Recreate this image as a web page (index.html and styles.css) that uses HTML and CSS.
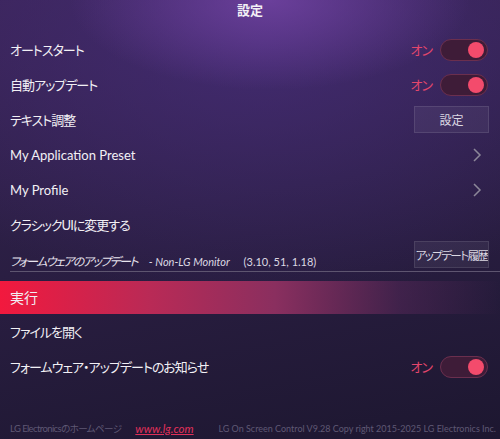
FILE: index.html
```html
<!DOCTYPE html>
<html lang="ja">
<head>
    <meta charset="UTF-8">
    <title>設定</title>
    <link rel="stylesheet" href="styles.css">
</head>
<body>
    <div id="app">
        <div class="title">設定</div>
        <div class="row">
            <span class="label jp">オートスタート</span>
            <span class="switch-wrap"><span class="on-text">オン</span><span class="switch"><span class="knob"></span></span></span>
        </div>
        <div class="row">
            <span class="label jp">自動アップデート</span>
            <span class="switch-wrap"><span class="on-text">オン</span><span class="switch"><span class="knob"></span></span></span>
        </div>
        <div class="row">
            <span class="label jp">テキスト調整</span>
            <button class="small-btn">設定</button>
        </div>
        <div class="row">
            <span class="label">My Application Preset</span>
            <svg class="chevron" width="10" height="14" viewBox="0 0 10 14"><polyline points="2,1 8,7 2,13" fill="none" stroke="#8c8799" stroke-width="1.5"/></svg>
        </div>
        <div class="row">
            <span class="label">My Profile</span>
            <svg class="chevron" width="10" height="14" viewBox="0 0 10 14"><polyline points="2,1 8,7 2,13" fill="none" stroke="#8c8799" stroke-width="1.5"/></svg>
        </div>
        <div class="row">
            <span class="label jp">クラシックUIに変更する</span>
        </div>
        <div class="fw-row">
            <span class="fw-text">
                <span class="fw-title">フォームウェアのアップデート</span>
                <span class="fw-model">- Non-LG Monitor</span>
                <span class="fw-ver">(3.10, 51, 1.18)</span>
            </span>
            <button class="small-btn history">アップデート履歴</button>
        </div>
        <div class="run-bar">実行</div>
        <div class="row">
            <span class="label jp">ファイルを開く</span>
        </div>
        <div class="row">
            <span class="label jp">フォームウェア・アップデートのお知らせ</span>
            <span class="switch-wrap"><span class="on-text">オン</span><span class="switch"><span class="knob"></span></span></span>
        </div>
        <div class="footer">
            <span class="home">LG Electronicsのホームページ</span>
            <a class="link" href="#">www.lg.com</a>
            <span class="copy">LG On Screen Control V9.28 Copy right 2015-2025 LG Electronics Inc.</span>
        </div>
    </div>
</body>
</html>
```
FILE: styles.css
```css
body {
    margin: 0;
    padding: 0;
    font-family: Lato, "Noto Sans CJK JP", sans-serif;
    font-feature-settings: "palt";
    color: #f2f0f5;
}

#app {
    height: 439px;
    display: flex;
    flex-direction: column;
    overflow: hidden;
    background:
        radial-gradient(ellipse 200px 90px at 270px 0px, rgba(120, 70, 170, 0.75), rgba(120, 70, 170, 0) 100%),
        radial-gradient(ellipse 420px 260px at 260px 40px, rgba(70, 45, 120, 0.8), rgba(70, 45, 120, 0) 100%),
        linear-gradient(170deg, #3a2457 0%, #2c1f45 45%, #1d1730 100%);
}

.title {
    height: 32px;
    line-height: 20px;
    text-align: center;
    font-size: 13px;
    font-weight: bold;
}

.row {
    height: 35px;
    flex-shrink: 0;
    display: flex;
    align-items: center;
    justify-content: space-between;
    padding: 0 12px 0 10px;
}

.label {
    font-size: 13px;
}

.label.jp {
    letter-spacing: -1px;
}

.switch-wrap {
    display: flex;
    align-items: center;
    gap: 8px;
}

.on-text {
    color: #e2466c;
    font-size: 13px;
    letter-spacing: -1px;
}

.switch {
    width: 40px;
    height: 20px;
    border: 1px solid #6b2f4e;
    border-radius: 12px;
    background-color: #3e1c38;
    display: flex;
    align-items: center;
    justify-content: flex-end;
    padding: 0 3px;
}

.knob {
    width: 16px;
    height: 16px;
    border-radius: 50%;
    background-color: #f34b6c;
}

.small-btn {
    width: 75px;
    height: 27px;
    margin-right: -1px;
    padding: 0;
    border: 1px solid rgba(255, 255, 255, 0.1);
    background-color: rgba(255, 255, 255, 0.06);
    color: #dcd8e2;
    font-family: inherit;
    font-feature-settings: "palt";
    font-size: 12px;
    white-space: nowrap;
    overflow: hidden;
}

.chevron {
    margin-right: 6px;
}

.fw-row {
    height: 29px;
    flex-shrink: 0;
    display: flex;
    align-items: flex-end;
    justify-content: space-between;
    margin-left: 10px;
    padding-right: 12px;
    border-bottom: 1px solid #5e5570;
}

.fw-text {
    padding-bottom: 2px;
    font-style: italic;
}

.fw-title {
    font-size: 12px;
    letter-spacing: -1.6px;
    color: #e8e4ee;
}

.fw-model {
    font-size: 11px;
    margin-left: 8px;
    color: #dcd8e2;
}

.fw-ver {
    font-style: normal;
    font-size: 11px;
    margin-left: 10px;
    color: #dcd8e2;
}

.history {
    margin-bottom: 3px;
    font-size: 11.5px;
    letter-spacing: -1.6px;
}

.run-bar {
    height: 33px;
    flex-shrink: 0;
    margin-top: 9px;
    line-height: 33px;
    padding-left: 10px;
    font-size: 14px;
    background: linear-gradient(90deg, #f2193e 0%, #b92a56 30%, #8a2f5f 55%, rgba(90, 40, 90, 0.5) 80%, rgba(40, 30, 60, 0) 100%);
}

.footer {
    margin-top: auto;
    height: 18px;
    padding: 0 4px 2px 10px;
    display: flex;
    align-items: center;
    font-size: 9.5px;
    color: #5f5874;
    white-space: nowrap;
}

.home {
    letter-spacing: -0.6px;
}

.link {
    margin-left: 14px;
    color: #e0305a;
    font-style: italic;
    font-size: 11.5px;
    text-decoration: underline;
}

.copy {
    margin-left: auto;
    font-size: 9px;
}
```
